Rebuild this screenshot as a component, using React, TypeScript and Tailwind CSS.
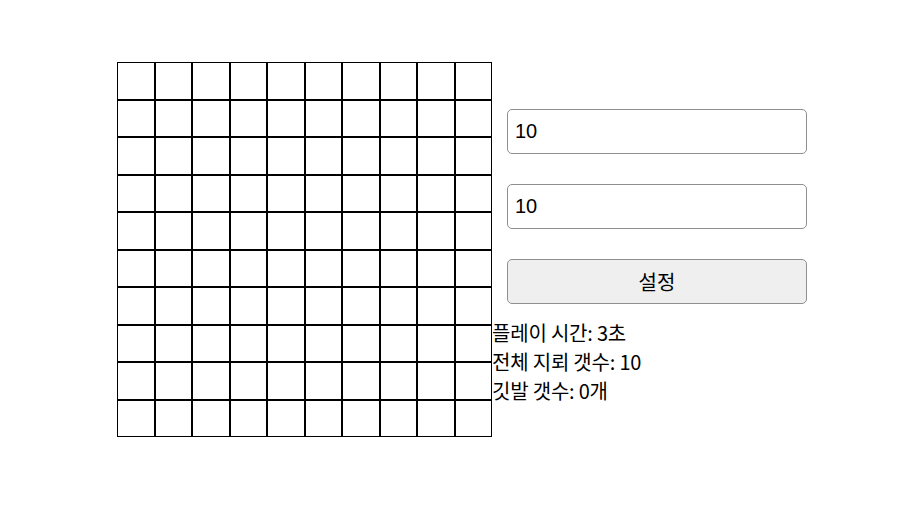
import React from "react";

export default function App() {
  const cells = Array.from({ length: 100 });
  return (
    <div className="w-[915px] h-[531px] bg-white flex items-start pt-[62px] pl-[117px] font-['Noto_Sans_CJK_KR',sans-serif]">
      <div className="grid grid-cols-[repeat(10,37.5px)] grid-rows-[repeat(10,37.5px)]">
        {cells.map((_, i) => (
          <div key={i} className="border border-black bg-white" />
        ))}
      </div>
      <div className="flex flex-col">
        <input
          defaultValue="10"
          className="ml-[15px] mt-[47px] w-[300px] h-[45px] border border-[#8f8f8f] rounded-[5px] px-[7px] text-[20px] text-black font-['Liberation_Sans',sans-serif] outline-none"
        />
        <input
          defaultValue="10"
          className="ml-[15px] mt-[30px] w-[300px] h-[45px] border border-[#8f8f8f] rounded-[5px] px-[7px] text-[20px] text-black font-['Liberation_Sans',sans-serif] outline-none"
        />
        <button className="ml-[15px] mt-[30px] w-[300px] h-[45px] border border-[#8f8f8f] rounded-[5px] bg-[#efefef] text-[20px] text-black font-['Noto_Sans_CJK_KR',sans-serif]">
          설정
        </button>
        <div className="mt-[14px] text-[20px] leading-[29px] text-black tracking-[-0.2px]">
          <div>플레이 시간: 3초</div>
          <div>전체 지뢰 갯수: 10</div>
          <div>깃발 갯수: 0개</div>
        </div>
      </div>
    </div>
  );
}
